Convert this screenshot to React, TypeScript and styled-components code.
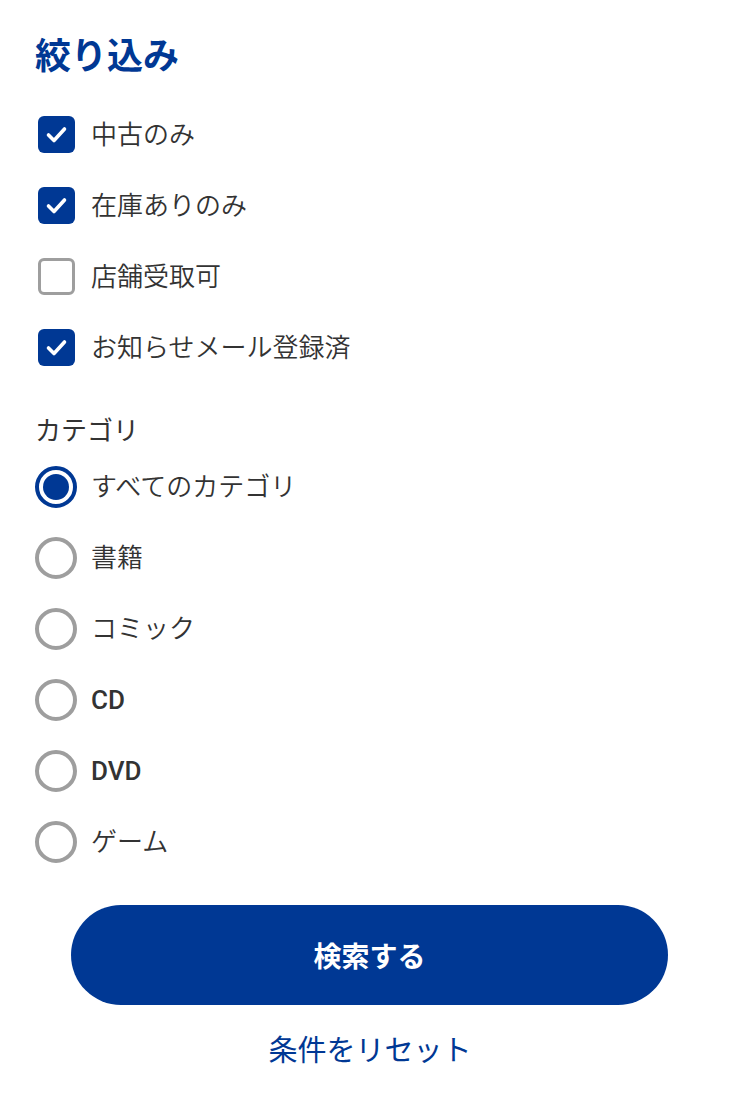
import React, { useState } from 'react';
import styled, { createGlobalStyle } from 'styled-components';

const GlobalStyle = createGlobalStyle`
  body {
    margin: 0;
    background: #ffffff;
    font-family: Roboto, "Noto Sans CJK JP", sans-serif;
    color: #333333;
  }
`;

const BLUE = '#003894';

const checks = [
  { label: '中古のみ', checked: true },
  { label: '在庫ありのみ', checked: true },
  { label: '店舗受取可', checked: false },
  { label: 'お知らせメール登録済', checked: true },
];

const categories = [
  { name: 'すべてのカテゴリ', latin: false },
  { name: '書籍', latin: false },
  { name: 'コミック', latin: false },
  { name: 'CD', latin: true },
  { name: 'DVD', latin: true },
  { name: 'ゲーム', latin: false },
];

export default function App() {
  const [selected, setSelected] = useState(0);

  return (
    <>
      <GlobalStyle/>
      <Panel>
        <Title>絞り込み</Title>

        <List>
          {checks.map((c) => (
            <Row key={c.label}>
              <Slot>
                <CheckBox $checked={c.checked}>
                  {c.checked && (
                    <svg width="37" height="37" viewBox="0 0 37 37">
                      <path d="M10.5 19 L16 24.5 L26.5 13" fill="none" stroke="#fff"
                            strokeWidth="3.6" strokeLinecap="round" strokeLinejoin="round"/>
                    </svg>
                  )}
                </CheckBox>
              </Slot>
              <Label>{c.label}</Label>
            </Row>
          ))}
        </List>

        <SubTitle>カテゴリ</SubTitle>

        <List>
          {categories.map((c, i) => (
            <Row key={c.name} onClick={() => setSelected(i)}>
              <Slot>
                <Radio $checked={selected === i}/>
              </Slot>
              <Label $latin={c.latin}>{c.name}</Label>
            </Row>
          ))}
        </List>

        <SearchButton>検索する</SearchButton>
        <ResetLink href="#!">条件をリセット</ResetLink>
      </Panel>
    </>
  );
}

const Panel = styled.div`
  display: flex;
  flex-direction: column;
  padding: 32px 35px 20px;
`;

const Title = styled.h1`
  margin: 0 0 17px 0;
  font-size: 36px;
  line-height: 50px;
  font-weight: 700;
  color: ${BLUE};
`;

const SubTitle = styled.h2`
  margin: 28px 0 0 0;
  font-size: 26px;
  line-height: 40px;
  font-weight: 400;
  color: #333333;
`;

const List = styled.div`
  display: flex;
  flex-direction: column;
`;

const Row = styled.label`
  display: flex;
  align-items: center;
  gap: 14px;
  height: 71px;
  cursor: pointer;
`;

const Slot = styled.span`
  display: flex;
  align-items: center;
  justify-content: center;
  width: 42px;
  height: 42px;
`;

const CheckBox = styled.span<{ $checked: boolean }>`
  display: flex;
  box-sizing: border-box;
  width: 37px;
  height: 37px;
  border-radius: 6px;
  background: ${p => p.$checked ? BLUE : '#fff'};
  border: ${p => p.$checked ? 'none' : '3.5px solid #9e9e9e'};
`;

const Radio = styled.span<{ $checked: boolean }>`
  position: relative;
  box-sizing: border-box;
  width: 42px;
  height: 42px;
  border-radius: 50%;
  border: 4px solid ${p => p.$checked ? BLUE : '#9e9e9e'};

  &::after {
    content: '';
    display: ${p => p.$checked ? 'block' : 'none'};
    position: absolute;
    inset: 4px;
    border-radius: 50%;
    background: ${BLUE};
  }
`;

const Label = styled.span<{ $latin?: boolean }>`
  font-size: 26px;
  line-height: 36px;
  font-weight: ${p => p.$latin ? 500 : 350};
  color: #333333;
`;

const SearchButton = styled.button`
  margin: 28px 37px 0 36px;
  height: 100px;
  border: none;
  border-radius: 50px;
  background: ${BLUE};
  color: #ffffff;
  font-family: Roboto, "Noto Sans CJK JP", sans-serif;
  font-size: 28px;
  font-weight: 700;
  cursor: pointer;
`;

const ResetLink = styled.a`
  align-self: center;
  margin: 26px 0 0 0;
  font-size: 29px;
  line-height: 40px;
  font-weight: 400;
  color: ${BLUE};
  text-decoration: none;
`;
